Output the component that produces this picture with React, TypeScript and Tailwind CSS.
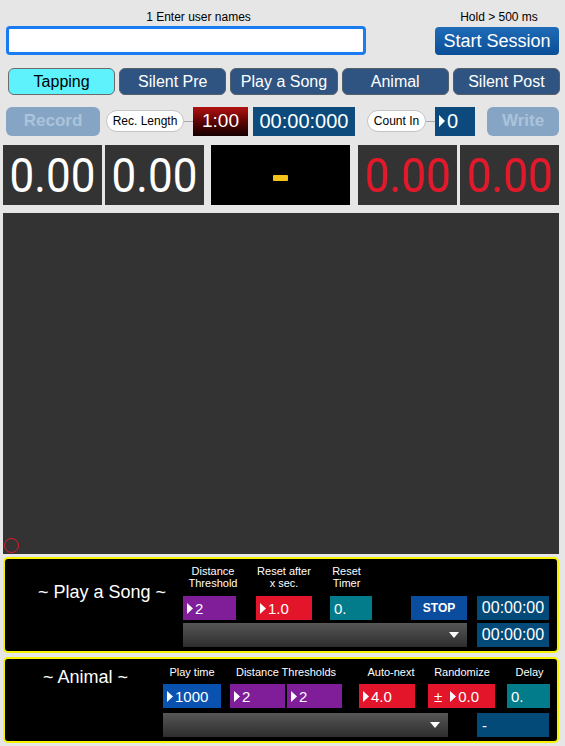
import React from "react";

const F = { fontFamily: '"Liberation Sans", Arial, sans-serif' };

function Tri() {
  return (
    <svg width="6" height="11" viewBox="0 0 6 11" className="shrink-0">
      <polygon points="0,0 6,5.5 0,11" fill="white" />
    </svg>
  );
}

function Val({ w, bg, tri = true, children }: { w: string; bg: string; tri?: boolean; children: React.ReactNode }) {
  return (
    <div className={`${w} ${bg} h-[24px] flex items-center pl-[4px] gap-[2px] text-white text-[15px] leading-none`}>
      {tri && <Tri />}
      <span>{children}</span>
    </div>
  );
}

function Dropdown({ w }: { w: string }) {
  return (
    <div className={`${w} h-[24px] bg-gradient-to-b from-[#565656] to-[#2e2e2e] flex items-center justify-end pr-[8px]`}>
      <svg width="10" height="6" viewBox="0 0 10 6">
        <polygon points="0,0 10,0 5,6" fill="white" />
      </svg>
    </div>
  );
}

function TimeBox({ children }: { children: React.ReactNode }) {
  return (
    <div className="w-[72px] h-[24px] bg-[#034a79] text-white text-[16px] leading-none flex items-center justify-center">
      {children}
    </div>
  );
}

function Big({ red, children }: { red?: boolean; children: React.ReactNode }) {
  return (
    <div className={`w-[99px] bg-[#333333] ${red ? "text-[#e3182b]" : "text-white"} flex items-center justify-center overflow-hidden`}>
      <span className="text-[44px] font-normal leading-none scale-y-110 inline-block" style={{ fontFamily: 'Roboto, "Open Sans", sans-serif' }}>{children}</span>
    </div>
  );
}

export default function App() {
  return (
    <div className="w-[565px] h-[746px] bg-[#e6e6e6] overflow-hidden" style={F}>
      {/* top row */}
      <div className="flex pt-[10px]">
        <div className="ml-[6px] w-[360px] flex flex-col items-center">
          <div className="text-[12px] leading-[14px] text-black ml-[25px]">1 Enter user names</div>
          <div className="mt-[2px] w-[360px] h-[29px] rounded-[4px] border-[3px] border-[#1a7cf0] bg-white"></div>
        </div>
        <div className="ml-[69px] w-[124px] flex flex-col items-center">
          <div className="text-[12px] leading-[14px] text-black ml-[4px]">Hold &gt; 500 ms</div>
          <div className="mt-[3px] w-[124px] h-[28px] rounded-[4px] bg-gradient-to-b from-[#1f6cb8] to-[#0a4e96] text-white text-[18px] leading-none flex items-center justify-center">
            Start Session
          </div>
        </div>
      </div>

      {/* tabs */}
      <div className="flex gap-[4px] pl-[8px] pr-[5px] mt-[13px]">
        <div className="flex-1 h-[27px] rounded-[6px] bg-[#5ef2fd] border border-[#6b6b6b] text-black text-[16px] flex items-center justify-center">Tapping</div>
        {["Silent Pre", "Play a Song", "Animal", "Silent Post"].map((t) => (
          <div key={t} className="flex-1 h-[27px] rounded-[6px] bg-[#2f5482] border border-[#555f6a] text-white text-[16px] flex items-center justify-center">{t}</div>
        ))}
      </div>

      {/* controls row */}
      <div className="flex items-center mt-[11px] h-[30px]">
        <div className="ml-[6px] w-[94px] h-[29px] rounded-[6px] bg-[#86a5c4] text-[#abc3db] font-bold text-[17px] flex items-center justify-center">Record</div>
        <div className="ml-[6px] w-[78px] h-[22px] rounded-full bg-white border border-[#c4c4c4] text-black text-[12px] flex items-center justify-center">Rec. Length</div>
        <div className="w-[9px] h-px bg-[#aaaaaa]"></div>
        <div className="w-[55px] h-[29px] bg-gradient-to-b from-[#b31212] to-[#170000] text-white text-[19px] flex items-center justify-center">1:00</div>
        <div className="ml-[5px] w-[102px] h-[29px] bg-[#0c4b7c] text-white text-[20px] flex items-center justify-center">00:00:000</div>
        <div className="ml-[12px] w-[59px] h-[22px] rounded-full bg-white border border-[#c4c4c4] text-black text-[12px] flex items-center justify-center">Count In</div>
        <div className="w-[9px] h-px bg-[#aaaaaa]"></div>
        <div className="w-[40px] h-[29px] bg-[#0c4a7e] text-white text-[20px] flex items-center pl-[4px] gap-[2px]">
          <svg width="6" height="12" viewBox="0 0 6 12"><polygon points="0,0 6,6 0,12" fill="white" /></svg>
          <span>0</span>
        </div>
        <div className="ml-[12px] w-[72px] h-[29px] rounded-[6px] bg-[#86a5c4] text-[#abc3db] font-bold text-[17px] flex items-center justify-center">Write</div>
      </div>

      {/* big numbers */}
      <div className="flex mt-[9px] h-[60px] gap-[3px] pl-[3px]">
        <Big>0.00</Big>
        <Big>0.00</Big>
        <div className="ml-[4px] w-[139px] bg-black flex items-center justify-center">
          <div className="w-[15px] h-[6px] rounded-[1px] bg-[#f5c21c] mt-[6px]"></div>
        </div>
        <div className="ml-[5px] flex gap-[3px]">
          <Big red>0.00</Big>
          <Big red>0.00</Big>
        </div>
      </div>

      {/* canvas */}
      <div className="relative ml-[3px] mt-[8px] w-[556px] h-[341px] bg-[#333333]">
        <div className="absolute left-[1px] bottom-[1px] w-[15px] h-[15px] rounded-full border-[1.5px] border-[#e8192c]"></div>
      </div>

      {/* Play a Song panel */}
      <div className="ml-[3px] mt-[3px] w-[556px] h-[96px] rounded-[5px] border-2 border-[#f7f300] bg-black flex">
        <div className="w-[178px] pl-[33px] pt-[23px] text-white text-[18px] leading-[20px]">~ Play a Song ~</div>
        <div className="flex flex-col">
          <div className="flex h-[37px] pt-[6px] text-white text-[11px] leading-[12px]">
            <div className="w-[60px] text-center">Distance<br />Threshold</div>
            <div className="ml-[12px] w-[58px] text-center">Reset after<br />x sec.</div>
            <div className="ml-[17px] w-[33px] text-center">Reset<br />Timer</div>
          </div>
          <div className="flex">
            <Val w="w-[53px]" bg="bg-[#7f1e98]">2</Val>
            <div className="ml-[20px]"><Val w="w-[56px]" bg="bg-[#e3152a]">1.0</Val></div>
            <div className="ml-[18px]"><Val w="w-[42px]" bg="bg-[#027b8a]" tri={false}>0.</Val></div>
            <div className="ml-[39px] w-[56px] h-[24px] bg-[#0a4c9d] text-white font-bold text-[12px] flex items-center justify-center">STOP</div>
            <div className="ml-[10px]"><TimeBox>00:00:00</TimeBox></div>
          </div>
          <div className="flex mt-[3px]">
            <Dropdown w="w-[284px]" />
            <div className="ml-[10px]"><TimeBox>00:00:00</TimeBox></div>
          </div>
        </div>
      </div>

      {/* Animal panel */}
      <div className="ml-[3px] mt-[4px] w-[556px] h-[86px] rounded-[5px] border-2 border-[#f7f300] bg-black flex">
        <div className="w-[158px] pl-[38px] pt-[8px] text-white text-[18px] leading-[20px]">~ Animal ~</div>
        <div className="flex flex-col">
          <div className="flex h-[25px] pt-[7px] text-white text-[11px] leading-[12px]">
            <div className="w-[58px] text-center">Play time</div>
            <div className="ml-[9px] w-[112px] text-center">Distance Thresholds</div>
            <div className="ml-[17px] w-[64px] text-center">Auto-next</div>
            <div className="ml-[5px] w-[68px] text-center">Randomize</div>
            <div className="ml-[12px] w-[43px] text-center">Delay</div>
          </div>
          <div className="flex">
            <Val w="w-[58px]" bg="bg-[#0a52b0]">1000</Val>
            <div className="ml-[9px]"><Val w="w-[55px]" bg="bg-[#7f1e98]">2</Val></div>
            <div className="ml-[2px]"><Val w="w-[55px]" bg="bg-[#7f1e98]">2</Val></div>
            <div className="ml-[17px]"><Val w="w-[56px]" bg="bg-[#e3152a]">4.0</Val></div>
            <div className="ml-[13px] w-[67px] h-[24px] bg-[#e3152a] flex items-center pl-[6px] gap-[2px] text-white text-[15px] leading-none">
              <span className="mr-[6px]">±</span>
              <Tri />
              <span>0.0</span>
            </div>
            <div className="ml-[12px]"><Val w="w-[43px]" bg="bg-[#027b8a]" tri={false}>0.</Val></div>
          </div>
          <div className="flex mt-[5px]">
            <Dropdown w="w-[285px]" />
            <div className="ml-[29px] w-[72px] h-[24px] bg-[#034a79] text-white text-[15px] leading-none flex items-center pl-[5px]">-</div>
          </div>
        </div>
      </div>
    </div>
  );
}
